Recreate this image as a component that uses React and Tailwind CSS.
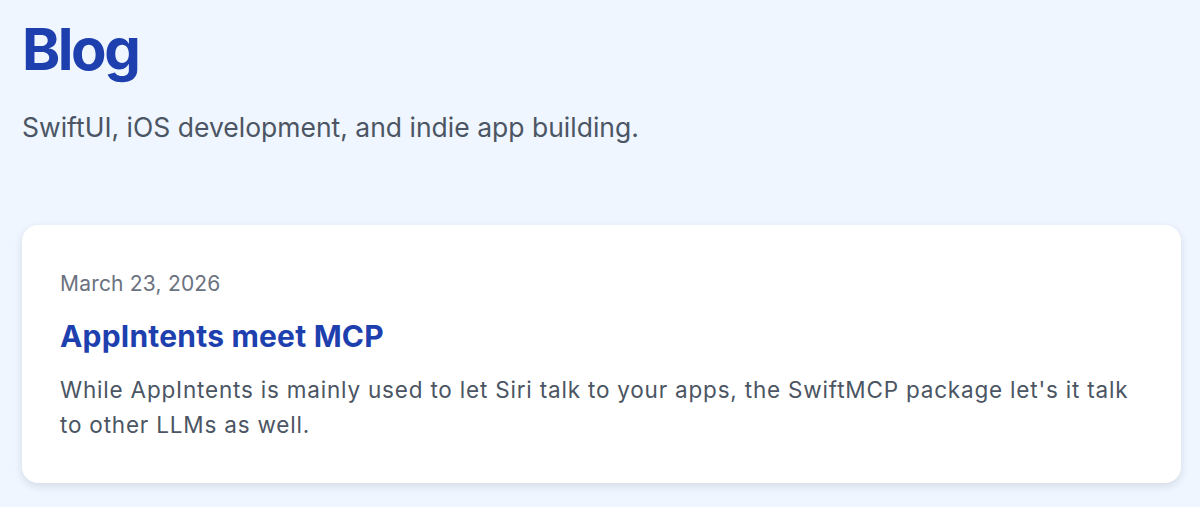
import React from 'react'

const posts = [
  {
    date: 'March 23, 2026',
    title: 'AppIntents meet MCP',
    excerpt:
      "While AppIntents is mainly used to let Siri talk to your apps, the SwiftMCP package let's it talk to other LLMs as well.",
  },
]

function App() {
  return (
    <div className="min-h-screen bg-[#eff6ff] pl-[22px] pr-[19px] pt-[15px] font-['Inter',sans-serif]">
      <h1 className="text-[58px] font-bold leading-[68px] tracking-[-2.5px] text-[#1e40af]">Blog</h1>
      <p className="mt-[27px] text-[26.5px] leading-[34px] text-[#4b5563]">
        SwiftUI, iOS development, and indie app building.
      </p>

      <div className="mt-[81px] flex flex-col gap-6">
        {posts.map((post) => (
          <div
            key={post.title}
            className="rounded-2xl bg-white px-[38px] pt-[45px] pb-[41px] shadow-[0_3px_8px_rgba(15,23,42,0.12)]"
          >
            <p className="text-[21px] leading-[28px] tracking-[0.2px] text-[#6b7280]">{post.date}</p>
            <h2 className="mt-[20px] text-[30px] font-bold leading-[36px] tracking-[0.2px] text-[#1e40af]">
              {post.title}
            </h2>
            <p className="mt-[18px] text-[22.5px] leading-[35px] tracking-[0.8px] text-[#4b5563]">{post.excerpt}</p>
          </div>
        ))}
      </div>
    </div>
  )
}

export default App
